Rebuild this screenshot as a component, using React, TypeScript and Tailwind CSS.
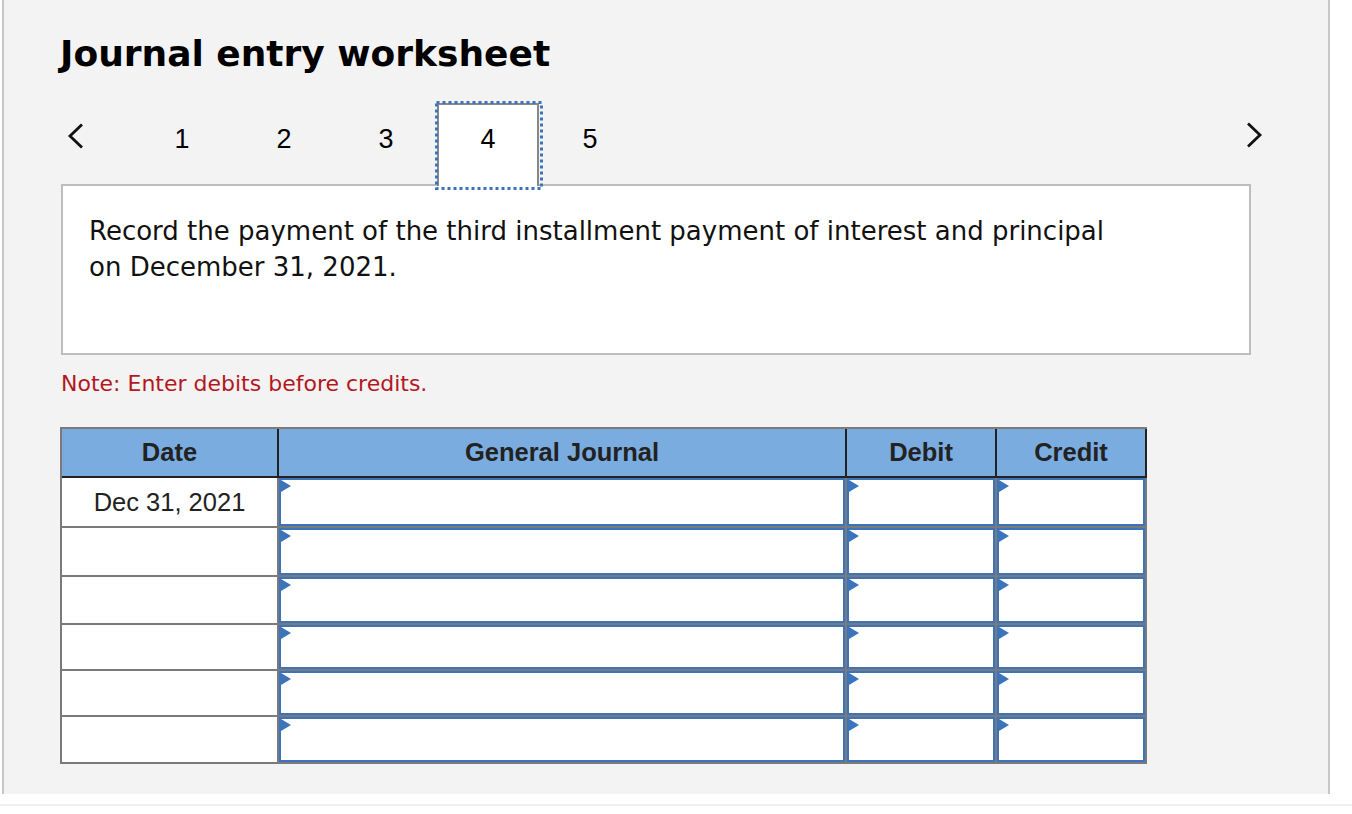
import React from "react";

const verdana = { fontFamily: '"DejaVu Sans", Verdana, sans-serif' };
const arial = { fontFamily: '"Liberation Sans", Arial, Helvetica, sans-serif' };

function Chevron({ dir }: { dir: "left" | "right" }) {
  const pts = dir === "left" ? "16,1.5 4,13 16,24.5" : "4,1.5 16,13 4,24.5";
  return (
    <svg width="20" height="26" viewBox="0 0 20 26" className="block">
      <polyline points={pts} fill="none" stroke="#111" strokeWidth="2.8" strokeLinejoin="miter" />
    </svg>
  );
}

function Flag() {
  return (
    <svg width="10" height="12" viewBox="0 0 10 12" className="absolute left-0 top-0">
      <polygon points="0,0 10,6 0,12" fill="#3b74bb" />
    </svg>
  );
}

function InputCell({ w }: { w: string }) {
  return (
    <div className={`${w} h-full border-r-2 border-b-2 border-[#7a7a7a]`}>
      <div className="relative h-full w-full border-2 border-[#3b74bb] bg-white">
        <Flag />
      </div>
    </div>
  );
}

const rowHeights = ["h-[50px]", "h-[49px]", "h-[48px]", "h-[46px]", "h-[46px]", "h-[47px]"];

export default function App() {
  return (
    <div className="w-[1352px] h-[814px] bg-white overflow-hidden">
      <div className="ml-[2px] w-[1328px] h-[794px] bg-[#f3f3f3] border-x-2 border-[#c6c6c6] pl-[56px] pt-[33px]">
        <h1 className="text-[36px] leading-[42px] font-bold text-black" style={verdana}>
          Journal entry worksheet
        </h1>

        {/* nav row */}
        <div className="mt-[28px] ml-[1px] w-[1204px] flex items-start -mb-[2px] relative z-10">
          <div className="mt-[20px] ml-[5px]">
            <Chevron dir="left" />
          </div>
          <div className="ml-[45px] flex">
            {[1, 2, 3, 4, 5].map((n) =>
              n === 4 ? (
                <div
                  key={n}
                  className="relative w-[102px] h-[83px] border-2 border-b-0 border-[#888888] bg-white pt-[21px] text-center text-[27px] leading-[27px] text-black"
                  style={arial}
                >
                  {n}
                  <svg
                    width="108"
                    height="89"
                    viewBox="0 0 108 89"
                    className="absolute -left-[4px] -top-[4px]"
                  >
                    <rect
                      x="1.5"
                      y="1.5"
                      width="105"
                      height="86"
                      fill="none"
                      stroke="#3b74bb"
                      strokeWidth="3"
                      strokeDasharray="3 3"
                    />
                  </svg>
                </div>
              ) : (
                <div
                  key={n}
                  className="w-[102px] h-[83px] border-2 border-b-0 border-transparent pt-[21px] text-center text-[27px] leading-[27px] text-black"
                  style={arial}
                >
                  {n}
                </div>
              )
            )}
          </div>
          <div className="flex-1" />
          <div className="mt-[19px] mr-[1px]">
            <Chevron dir="right" />
          </div>
        </div>

        {/* description */}
        <div className="ml-[1px] w-[1190px] h-[171px] border-2 border-[#bdbdbd] bg-white pl-[26px] pt-[27px]">
          <p className="max-w-[1040px] text-[26px] leading-[36px] text-[#111]" style={verdana}>
            Record the payment of the third installment payment of interest and principal on December 31, 2021.
          </p>
        </div>

        <p className="ml-[1px] mt-[16px] text-[22px] leading-[26px] text-[#b4171d]" style={verdana}>
          Note: Enter debits before credits.
        </p>

        {/* table */}
        <div className="mt-[30px] w-[1087px] border-l-2 border-t-2 border-[#7a7a7a]" style={arial}>
          <div className="flex h-[49px] bg-[#7aace0] text-[25.5px] font-bold text-[#222]">
            <div className="w-[217px] h-full border-r-2 border-b-2 border-[#222] flex items-center justify-center">
              Date
            </div>
            <div className="w-[568px] h-full border-r-2 border-b-2 border-[#222] flex items-center justify-center">
              General Journal
            </div>
            <div className="w-[150px] h-full border-r-2 border-b-2 border-[#222] flex items-center justify-center">
              Debit
            </div>
            <div className="w-[150px] h-full border-r-2 border-b-2 border-[#222] flex items-center justify-center">
              Credit
            </div>
          </div>
          {rowHeights.map((h, i) => (
            <div key={i} className={`flex ${h}`}>
              <div className="w-[217px] h-full border-r-2 border-b-2 border-[#7a7a7a] bg-white flex items-center justify-center text-[25.5px] text-[#222]">
                {i === 0 ? "Dec 31, 2021" : ""}
              </div>
              <InputCell w="w-[568px]" />
              <InputCell w="w-[150px]" />
              <InputCell w="w-[150px]" />
            </div>
          ))}
        </div>
      </div>
      <div className="mt-[10px] h-[2px] bg-[#efefef]" />
    </div>
  );
}
